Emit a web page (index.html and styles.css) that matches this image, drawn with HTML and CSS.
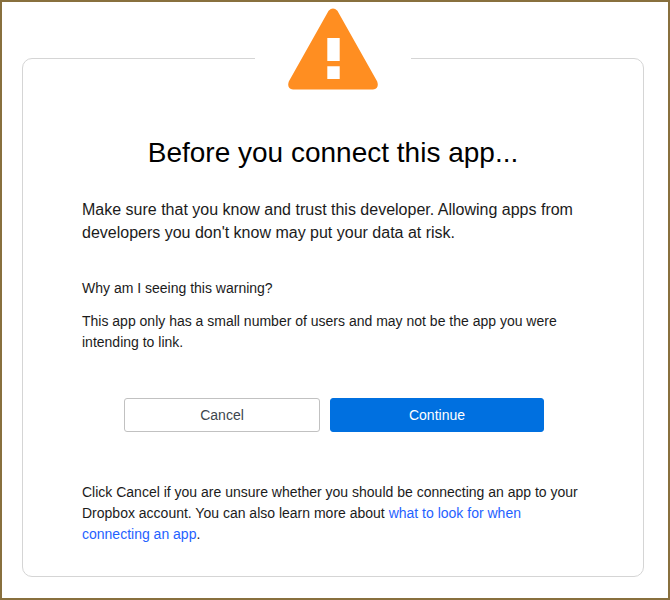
FILE: index.html
```html
<!DOCTYPE html>
<html lang="en">
<head>
<meta charset="utf-8">
<meta name="viewport" content="width=device-width, initial-scale=1">
<title>Before you connect this app...</title>
<link rel="stylesheet" href="styles.css">
</head>
<body>
<main class="card">
  <div class="badge">
    <svg class="badge-icon" viewBox="0 0 90 82" aria-hidden="true">
      <path fill="#ff8e21" fill-rule="evenodd" d="M40.600 2.800Q45-2 49.400 2.800L89.200 73.500Q91.500 80.500 85 81.500H5Q-1.500 80.500.8 73.500ZM39.300 30V53H51.700V30ZM39.300 58.300V71H51.700V58.300Z"/>
    </svg>
  </div>
  <h1 class="title">Before you connect this app...</h1>
  <p class="lead">Make sure that you know and trust this developer. Allowing apps from developers you don't know may put your data at risk.</p>
  <h2 class="question">Why am I seeing this warning?</h2>
  <p class="text">This app only has a small number of users and may not be the app you were intending to link.</p>
  <div class="actions">
    <button type="button" class="button">Cancel</button>
    <button type="button" class="button button-primary">Continue</button>
  </div>
  <p class="text">Click Cancel if you are unsure whether you should be connecting an app to your Dropbox account. You can also learn more about <a class="link" href="#">what to look for when connecting an app</a>.</p>
</main>
</body>
</html>
```
FILE: styles.css
```css
* {
  box-sizing: border-box;
}

body {
  margin: 0;
  min-height: 100vh;
  padding: 56px 24px 21px 20px;
  border: 2px solid #88703e;
  background: #fff;
  color: #1b1b1b;
  font-family: "Liberation Sans", Arial, sans-serif;
  font-size: 14px;
  line-height: 21px;
}

.card {
  padding: 0 59px 31px;
  border: 1px solid #d5d5d5;
  border-radius: 10px;
}

.badge {
  display: flex;
  justify-content: center;
  width: 156px;
  margin: -51px auto 0;
  background: #fff;
}

.badge-icon {
  display: block;
  width: 90px;
  height: 82px;
}

.title {
  margin: 47px 0 29px;
  color: #000;
  font-size: 28px;
  font-weight: 400;
  line-height: 32px;
  text-align: center;
}

.lead {
  margin: 0 0 34px;
  font-size: 16px;
  line-height: 23px;
}

.question {
  margin: 0 0 12px;
  font-size: 14px;
  font-weight: 400;
}

.text {
  margin: 0;
}

.actions {
  display: grid;
  grid-template-columns: 196fr 214fr;
  gap: 10px;
  margin: 45px 40px 50px 42px;
}

.button {
  height: 34px;
  padding: 0;
  border: 1px solid #c1c1c1;
  border-radius: 3px;
  background: #fff;
  color: #3d464d;
  font: inherit;
  cursor: pointer;
}

.button-primary {
  border-color: #0070e0;
  background: #0070e0;
  color: #fff;
}

.link {
  color: #1f62ff;
  text-decoration: none;
}
```
